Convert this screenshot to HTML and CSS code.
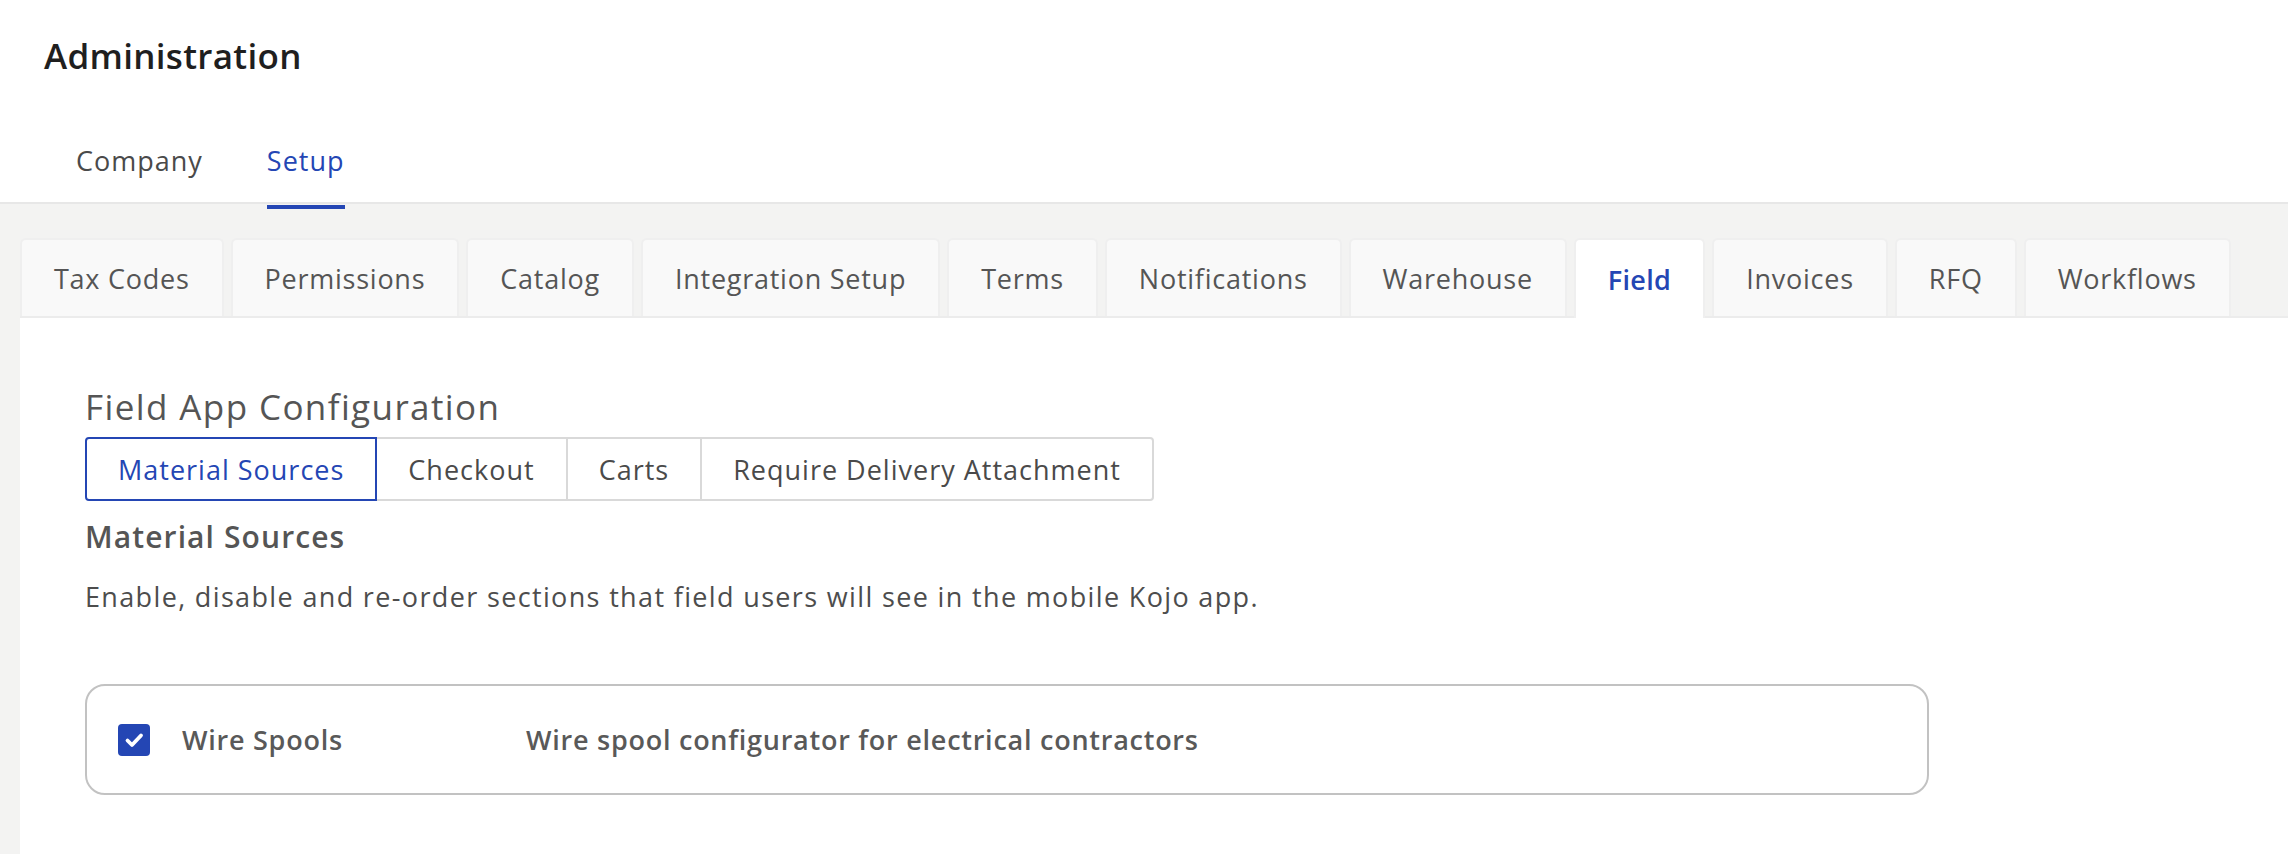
FILE: index.html
```html
<!DOCTYPE html>
<html lang="en">
<head>
<meta charset="utf-8">
<title>Administration</title>
<link rel="stylesheet" href="styles.css">
</head>
<body>
<header class="header">
  <h1 class="title">Administration</h1>
  <nav class="nav">
    <a class="nav-item">Company</a>
    <a class="nav-item active">Setup</a>
  </nav>
</header>
<main class="setup">
  <div class="tabs">
    <div class="tab">Tax Codes</div>
    <div class="tab">Permissions</div>
    <div class="tab">Catalog</div>
    <div class="tab">Integration Setup</div>
    <div class="tab">Terms</div>
    <div class="tab">Notifications</div>
    <div class="tab">Warehouse</div>
    <div class="tab active">Field</div>
    <div class="tab">Invoices</div>
    <div class="tab">RFQ</div>
    <div class="tab">Workflows</div>
  </div>
  <section class="panel">
    <h2 class="panel-title">Field App Configuration</h2>
    <div class="segments">
      <div class="segment active">Material Sources</div>
      <div class="segment">Checkout</div>
      <div class="segment">Carts</div>
      <div class="segment">Require Delivery Attachment</div>
    </div>
    <h3 class="section-title">Material Sources</h3>
    <p class="section-desc">Enable, disable and re-order sections that field users will see in the mobile Kojo app.</p>
    <div class="source-card">
      <span class="checkbox">
        <svg viewBox="0 0 32 32" width="32" height="32"><path d="M9.5 16.5 L14 21 L23 11.5" fill="none" stroke="#fff" stroke-width="3.8" stroke-linecap="round" stroke-linejoin="round"/></svg>
      </span>
      <span class="source-name">Wire Spools</span>
      <span class="source-desc">Wire spool configurator for electrical contractors</span>
    </div>
  </section>
</main>
</body>
</html>
```
FILE: styles.css
```css
* { box-sizing: border-box; }
html, body {
  margin: 0;
  padding: 0;
  height: 100%;
}
body {
  font-family: "Open Sans", "Liberation Sans", sans-serif;
  color: #555;
  background: #fff;
  overflow: hidden;
}
.header {
  padding: 32px 0 0 44px;
  border-bottom: 2px solid #e7e7e7;
  background: #fff;
}
.title {
  margin: 0;
  font-size: 35px;
  line-height: 48px;
  font-weight: 600;
  color: #1f1f1f;
  letter-spacing: 0.3px;
}
.nav {
  display: flex;
  margin-top: 40px;
  height: 82px;
}
.nav-item {
  position: relative;
  padding: 0 32px;
  font-size: 27px;
  line-height: 82px;
  color: #4a4a4a;
  letter-spacing: 1px;
}
.nav-item.active { color: #2446b4; }
.nav-item.active::after {
  content: "";
  position: absolute;
  left: 32px;
  right: 32px;
  bottom: -7px;
  height: 4px;
  background: #2446b4;
}
.setup {
  background: #f3f3f2;
  padding: 34px 0 0 20px;
  height: calc(100% - 204px);
  display: flex;
  flex-direction: column;
}
.tabs {
  display: flex;
  gap: 7px;
  position: relative;
  z-index: 1;
}
.tab {
  height: 78px;
  padding: 0 32px;
  display: flex;
  align-items: center;
  font-size: 27px;
  color: #555;
  background: #f9f9f9;
  border: 2px solid #efefef;
  border-bottom: none;
  border-radius: 6px 6px 0 0;
  letter-spacing: 0.75px;
}
.tab.active {
  background: #fff;
  color: #2446b4;
  font-weight: 600;
  letter-spacing: 0.3px;
  height: 80px;
  margin-bottom: -2px;
}
.panel {
  flex: 1;
  background: #fff;
  border-top: 2px solid #ececec;
  padding: 69px 0 0 65px;
}
.panel-title {
  margin: 0;
  font-size: 35px;
  line-height: 40px;
  font-weight: 500;
  color: #555;
  letter-spacing: 1.4px;
}
.segments {
  display: flex;
  margin-top: 10px;
}
.segment {
  position: relative;
  height: 64px;
  display: flex;
  align-items: center;
  padding: 0 31px;
  font-size: 27px;
  color: #4a4a4a;
  border: 2px solid #d9d9d9;
  margin-left: -2px;
  letter-spacing: 1px;
}
.segment:first-child { margin-left: 0; border-radius: 4px 0 0 4px; }
.segment:last-child { border-radius: 0 4px 4px 0; }
.segment.active {
  z-index: 1;
  border-color: #2446b4;
  color: #2446b4;
}
.section-title {
  margin: 16px 0 0;
  font-size: 30px;
  line-height: 40px;
  font-weight: 600;
  color: #555;
  letter-spacing: 1.1px;
}
.section-desc {
  margin: 22px 0 0;
  font-size: 27px;
  line-height: 36px;
  color: #4d4d4d;
  letter-spacing: 1.35px;
}
.source-card {
  margin-top: 69px;
  width: 1844px;
  height: 111px;
  border: 2px solid #c2c2c2;
  border-radius: 20px;
  display: flex;
  align-items: center;
  padding-left: 31px;
}
.checkbox {
  width: 32px;
  height: 32px;
  border-radius: 4px;
  background: #2446b4;
  display: flex;
}
.source-name {
  margin-left: 32px;
  width: 344px;
  font-size: 27px;
  font-weight: 600;
  color: #595959;
  letter-spacing: 0.75px;
}
.source-desc {
  font-size: 27px;
  font-weight: 600;
  color: #595959;
  letter-spacing: 0.75px;
}
```
